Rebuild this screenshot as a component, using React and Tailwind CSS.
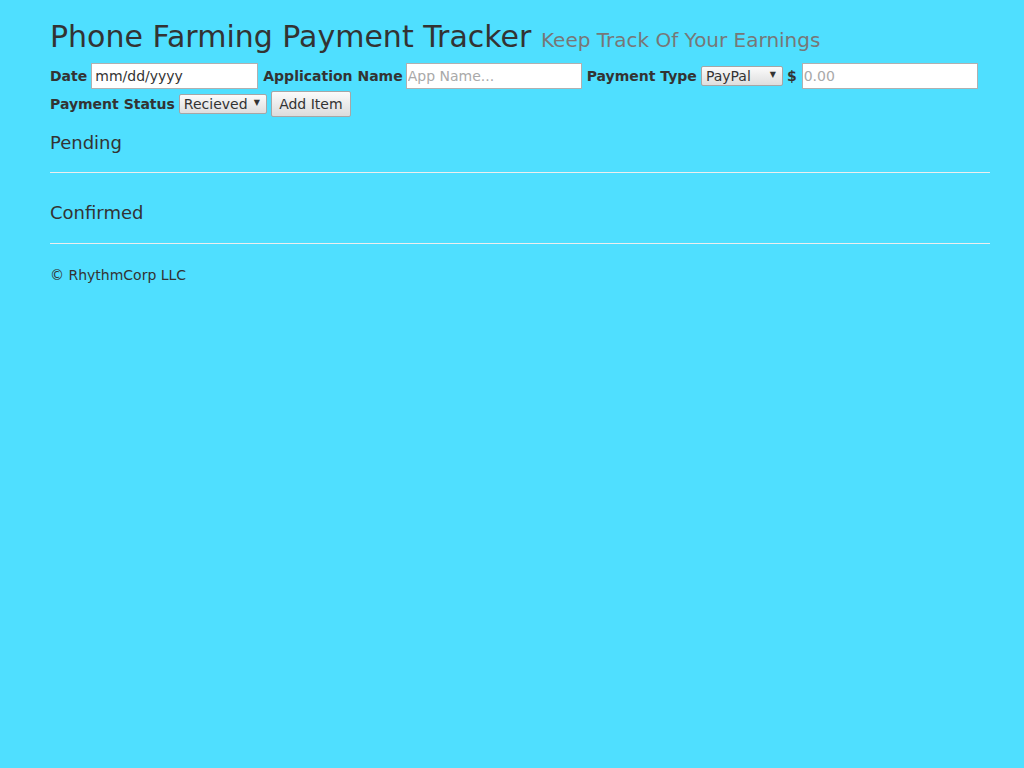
import React from 'react'

const font = { fontFamily: '"DejaVu Sans", Verdana, sans-serif' }

function FakeSelect({ value, width }) {
    return (
        <div className={"relative h-[20px] " + width}>
            <select
                defaultValue={value}
                className="appearance-none w-full h-full border border-[#a6a6a6] rounded-[2px] bg-gradient-to-b from-[#fbfbfb] to-[#dedede] text-[14px] leading-[18px] text-[#333] pl-[4px] pr-[16px] outline-none"
            >
                <option>{value}</option>
            </select>
            <span className="absolute right-[7px] top-[3px] text-[8px] text-[#333] pointer-events-none">▼</span>
        </div>
    )
}

export default function App() {
    return (
        <div style={font} className="min-h-[768px] w-full bg-[#4fdfff] text-[#333]">
            <div className="w-[940px] ml-[50px] pt-[17px]">

                <h1 className="text-[30px] leading-[40px] font-normal">
                    Phone Farming Payment Tracker{' '}
                    <small className="text-[20px] text-[#777]">Keep Track Of Your Earnings</small>
                </h1>

                <div className="flex flex-wrap items-center gap-y-[2px] mt-[3px] text-[14px]">
                    <label className="font-bold mr-[4px]">Date</label>
                    <input type="text" placeholder="mm/dd/yyyy" className="w-[167px] h-[26px] border border-[#b0b0b0] bg-white px-[3px] text-[14px] placeholder:text-[#333] outline-none mr-[5px]" />

                    <label className="font-bold mr-[3px]">Application Name</label>
                    <input type="text" placeholder="App Name..." className="w-[176px] h-[26px] border border-[#b0b0b0] bg-white px-[1px] text-[14px] placeholder:text-[#a9a9a9] outline-none mr-[5px]" />

                    <label className="font-bold mr-[4px]">Payment Type</label>
                    <div className="mr-[4px]">
                        <FakeSelect value="PayPal" width="w-[82px]" />
                    </div>

                    <label className="font-bold mr-[5px]">$</label>
                    <input type="text" placeholder="0.00" className="w-[176px] h-[26px] border border-[#b0b0b0] bg-white px-[1px] text-[14px] placeholder:text-[#a9a9a9] outline-none" />

                    <div className="w-full flex items-center">
                        <label className="font-bold mr-[4px]">Payment Status</label>
                        <div className="mr-[4px]">
                            <FakeSelect value="Recieved" width="w-[88px]" />
                        </div>
                        <button className="w-[80px] h-[26px] border border-[#a6a6a6] rounded-[2px] bg-gradient-to-b from-[#fbfbfb] to-[#dcdcdc] text-[14px] text-[#333]">Add Item</button>
                    </div>
                </div>

                <h4 className="text-[18px] leading-[20px] mt-[16px]">Pending</h4>
                <hr className="border-0 border-t border-[#eee] mt-[19px] mb-[30px]" />

                <h4 className="text-[18px] leading-[20px]">Confirmed</h4>
                <hr className="border-0 border-t border-[#eee] mt-[20px] mb-[21px]" />

                <footer className="text-[14px] leading-[20px]">© RhythmCorp LLC</footer>
            </div>
        </div>
    )
}
